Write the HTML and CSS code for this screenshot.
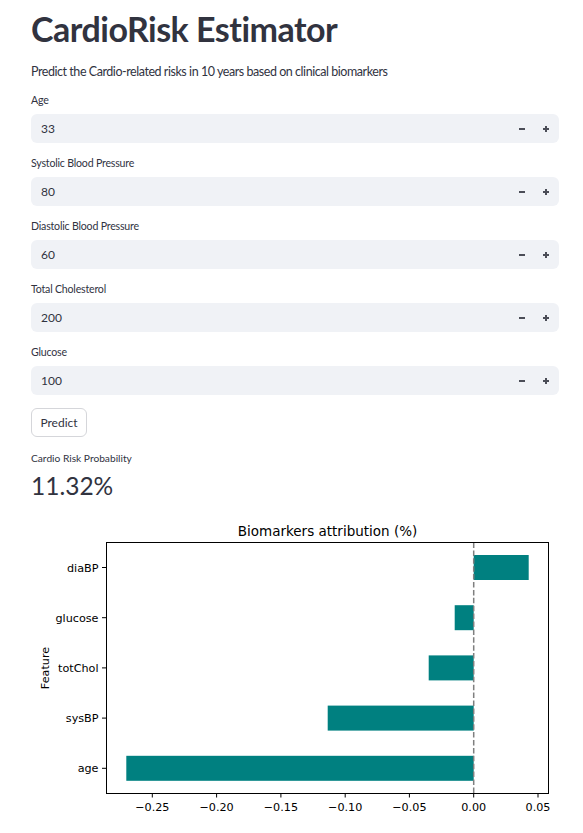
FILE: index.html
```html
<!DOCTYPE html>
<html>
<head>
<meta charset="utf-8">
<link rel="stylesheet" href="styles.css">
</head>
<body>
<main class="app">
  <h1 class="title">CardioRisk Estimator</h1>
  <p class="subtitle">Predict the Cardio-related risks in 10 years based on clinical biomarkers</p>

  <div class="field">
    <label class="label">Age</label>
    <div class="numinput"><span class="value">33</span>
      <span class="step"><svg width="8" height="8" viewBox="0 0 8 8"><rect x="1" y="3" width="6" height="2" fill="currentColor"/></svg></span>
      <span class="step"><svg width="8" height="8" viewBox="0 0 8 8"><rect x="1" y="3" width="6" height="2" fill="currentColor"/><rect x="3" y="1" width="2" height="6" fill="currentColor"/></svg></span>
    </div>
  </div>
  <div class="field">
    <label class="label">Systolic Blood Pressure</label>
    <div class="numinput"><span class="value">80</span>
      <span class="step"><svg width="8" height="8" viewBox="0 0 8 8"><rect x="1" y="3" width="6" height="2" fill="currentColor"/></svg></span>
      <span class="step"><svg width="8" height="8" viewBox="0 0 8 8"><rect x="1" y="3" width="6" height="2" fill="currentColor"/><rect x="3" y="1" width="2" height="6" fill="currentColor"/></svg></span>
    </div>
  </div>
  <div class="field">
    <label class="label">Diastolic Blood Pressure</label>
    <div class="numinput"><span class="value">60</span>
      <span class="step"><svg width="8" height="8" viewBox="0 0 8 8"><rect x="1" y="3" width="6" height="2" fill="currentColor"/></svg></span>
      <span class="step"><svg width="8" height="8" viewBox="0 0 8 8"><rect x="1" y="3" width="6" height="2" fill="currentColor"/><rect x="3" y="1" width="2" height="6" fill="currentColor"/></svg></span>
    </div>
  </div>
  <div class="field">
    <label class="label">Total Cholesterol</label>
    <div class="numinput"><span class="value">200</span>
      <span class="step"><svg width="8" height="8" viewBox="0 0 8 8"><rect x="1" y="3" width="6" height="2" fill="currentColor"/></svg></span>
      <span class="step"><svg width="8" height="8" viewBox="0 0 8 8"><rect x="1" y="3" width="6" height="2" fill="currentColor"/><rect x="3" y="1" width="2" height="6" fill="currentColor"/></svg></span>
    </div>
  </div>
  <div class="field">
    <label class="label">Glucose</label>
    <div class="numinput"><span class="value">100</span>
      <span class="step"><svg width="8" height="8" viewBox="0 0 8 8"><rect x="1" y="3" width="6" height="2" fill="currentColor"/></svg></span>
      <span class="step"><svg width="8" height="8" viewBox="0 0 8 8"><rect x="1" y="3" width="6" height="2" fill="currentColor"/><rect x="3" y="1" width="2" height="6" fill="currentColor"/></svg></span>
    </div>
  </div>

  <button class="btn">Predict</button>

  <div class="metric">
    <div class="metric-label">Cardio Risk Probability</div>
    <div class="metric-value">11.32%</div>
  </div>

  <svg class="chart" width="528" height="310" viewBox="31 515 528 310">
    <text class="ctitle" x="327.5" y="536" text-anchor="middle">Biomarkers attribution (%)</text>
    <g fill="#008080">
      <rect x="473.7" y="555" width="55" height="25"/>
      <rect x="454.7" y="605.2" width="19" height="25"/>
      <rect x="428.7" y="655.4" width="45" height="25"/>
      <rect x="327.7" y="705.6" width="146" height="25"/>
      <rect x="126.3" y="755.8" width="347.4" height="25"/>
    </g>
    <line x1="473.7" y1="542.5" x2="473.7" y2="793.5" stroke="#7f7f7f" stroke-width="1.5" stroke-dasharray="5.5 2.4"/>
    <rect x="106.5" y="542.5" width="442" height="251" fill="none" stroke="#000" stroke-width="1"/>
    <g stroke="#000" stroke-width="1">
      <line x1="102" y1="567.5" x2="106.5" y2="567.5"/>
      <line x1="102" y1="617.7" x2="106.5" y2="617.7"/>
      <line x1="102" y1="667.9" x2="106.5" y2="667.9"/>
      <line x1="102" y1="718.1" x2="106.5" y2="718.1"/>
      <line x1="102" y1="768.3" x2="106.5" y2="768.3"/>
      <line x1="152.3" y1="793.5" x2="152.3" y2="797.5"/>
      <line x1="216.6" y1="793.5" x2="216.6" y2="797.5"/>
      <line x1="280.9" y1="793.5" x2="280.9" y2="797.5"/>
      <line x1="345.2" y1="793.5" x2="345.2" y2="797.5"/>
      <line x1="409.4" y1="793.5" x2="409.4" y2="797.5"/>
      <line x1="473.7" y1="793.5" x2="473.7" y2="797.5"/>
      <line x1="538" y1="793.5" x2="538" y2="797.5"/>
    </g>
    <g class="tick" text-anchor="end">
      <text x="98.5" y="571.6">diaBP</text>
      <text x="98.5" y="621.8">glucose</text>
      <text x="98.5" y="672">totChol</text>
      <text x="98.5" y="722.2">sysBP</text>
      <text x="98.5" y="772.4">age</text>
    </g>
    <g class="tick" text-anchor="middle">
      <text x="152.3" y="810.5">−0.25</text>
      <text x="216.6" y="810.5">−0.20</text>
      <text x="280.9" y="810.5">−0.15</text>
      <text x="345.2" y="810.5">−0.10</text>
      <text x="409.4" y="810.5">−0.05</text>
      <text x="473.7" y="810.5">0.00</text>
      <text x="538" y="810.5">0.05</text>
    </g>
    <text class="tick" x="0" y="0" text-anchor="middle" transform="translate(49 668) rotate(-90)">Feature</text>
  </svg>
</main>
</body>
</html>
```
FILE: styles.css
```css
html, body {
  margin: 0;
  padding: 0;
  background: #ffffff;
}
body {
  font-family: Lato, "Noto Sans", sans-serif;
  color: #31333f;
}
.app {
  width: 528px;
  padding: 7px 24px 0 31px;
  display: flex;
  flex-direction: column;
}
.title {
  margin: 0;
  font-size: 34px;
  line-height: 44px;
  font-weight: 700;
  letter-spacing: -0.5px;
}
.subtitle {
  margin: 11px 0 10px;
  font-size: 12.5px;
  line-height: 20px;
  letter-spacing: -0.45px;
}
.field {
  display: flex;
  flex-direction: column;
  margin-bottom: 12px;
}
.label {
  font-size: 10.6px;
  line-height: 16px;
  margin-bottom: 6px;
  letter-spacing: -0.2px;
}
.numinput {
  height: 29px;
  background: #f0f2f6;
  border-radius: 6px;
  display: flex;
  align-items: center;
  padding-left: 10px;
  padding-right: 1px;
}
.value {
  flex: 1;
  font-size: 12px;
}
.step {
  width: 24px;
  height: 29px;
  display: flex;
  align-items: center;
  justify-content: center;
  color: #4b4d57;
}
.btn {
  align-self: flex-start;
  margin-top: 1px;
  height: 29px;
  width: 56px;
  padding: 0;
  background: #fff;
  border: 1px solid #d5d6da;
  border-radius: 6px;
  font-family: inherit;
  font-size: 12px;
  color: #31333f;
}
.metric {
  margin-top: 13px;
  display: flex;
  flex-direction: column;
}
.metric-label {
  font-size: 10.2px;
  line-height: 16px;
}
.metric-value {
  font-size: 24.5px;
  line-height: 36px;
  font-weight: 400;
  margin-top: 2px;
}
.chart {
  display: block;
  margin-top: 11px;
}
.ctitle {
  font-family: "DejaVu Sans", sans-serif;
  font-size: 13.5px;
  fill: #000;
}
.tick {
  font-family: "DejaVu Sans", sans-serif;
  font-size: 11.2px;
  fill: #000;
}
```
